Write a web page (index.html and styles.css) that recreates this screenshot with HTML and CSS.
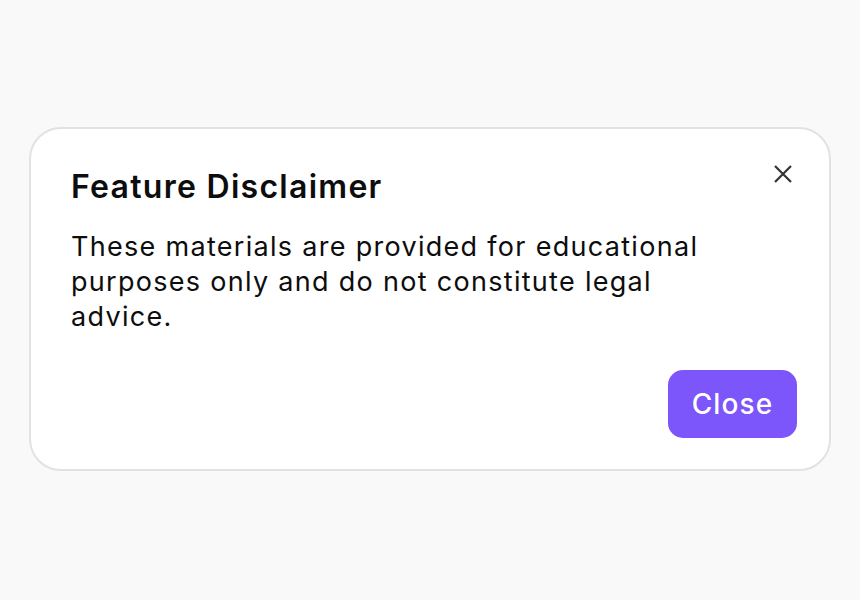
FILE: index.html
```html
<!DOCTYPE html>
<html>
<head>
<meta charset="utf-8">
<link rel="stylesheet" href="styles.css">
</head>
<body>
<div class="page">
  <div class="dialog">
    <div class="header">
      <h2 class="title">Feature Disclaimer</h2>
      <button class="x" aria-label="Close">
        <svg width="20" height="20" viewBox="0 0 20 20"><path d="M2 2L18 18M18 2L2 18" stroke="#333" stroke-width="2.2" fill="none"/></svg>
      </button>
    </div>
    <p class="body">These materials are provided for educational purposes only and do not constitute legal advice.</p>
    <div class="footer">
      <button class="close">Close</button>
    </div>
  </div>
</div>
</body>
</html>
```
FILE: styles.css
```css
html, body { margin: 0; padding: 0; }
body {
  background: #f9f9f9;
  font-family: Inter, "Noto Sans", sans-serif;
  width: 860px;
  height: 600px;
}
.page {
  padding: 127px 29px 0 29px;
}
.dialog {
  box-sizing: border-box;
  width: 802px;
  height: 344px;
  background: #fff;
  border: 2px solid #e2e2e2;
  border-radius: 32px;
  padding: 38px 32px 31px 40px;
  display: flex;
  flex-direction: column;
}
.header {
  display: flex;
  justify-content: space-between;
  align-items: flex-start;
}
.title {
  margin: 0;
  font-size: 32px;
  font-weight: 600;
  letter-spacing: 0.04em;
  color: #0d0d0d;
  line-height: 40px;
}
.x {
  border: 0;
  background: none;
  padding: 0;
  margin-top: -5px;
  margin-right: 2px;
  width: 24px;
  height: 24px;
  display: flex;
  align-items: center;
  justify-content: center;
}
.body {
  margin: 22px 0 0 0;
  font-size: 27px;
  line-height: 35px;
  letter-spacing: 0.048em;
  color: #0d0d0d;
  max-width: 660px;
}
.footer {
  margin-top: auto;
  display: flex;
  justify-content: flex-end;
}
.close {
  border: 0;
  background: #7c55fb;
  color: #fff;
  font-family: Inter, "Noto Sans", sans-serif;
  font-size: 28px;
  font-weight: 500;
  letter-spacing: 0.04em;
  width: 129px;
  height: 68px;
  border-radius: 15px;
}
```
